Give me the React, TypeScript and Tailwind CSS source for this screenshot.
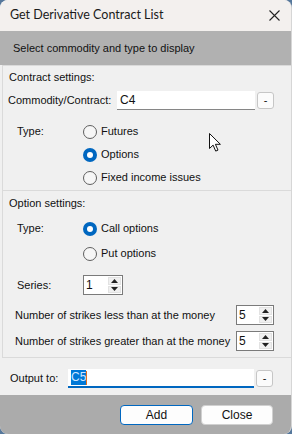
import React from 'react';

const Radio = ({ checked, label }: { checked?: boolean; label: string }) => (
  <div className="flex items-center gap-[4px]">
    {checked ? (
      <div className="w-[14px] h-[14px] rounded-full bg-[#0067c0] flex items-center justify-center">
        <div className="w-[6px] h-[6px] rounded-full bg-white" />
      </div>
    ) : (
      <div className="w-[14px] h-[14px] rounded-full border border-[#5f5f5f] bg-[#f6f6f6]" />
    )}
    <span>{label}</span>
  </div>
);

const Spin = ({ value, width }: { value: string; width: string }) => (
  <div className={`${width} h-[20px] bg-white border border-[#7a7a7a] flex`}>
    <span className="flex-1 pl-[2px] text-[12px] leading-[18px]">{value}</span>
    <div className="w-[14px] flex flex-col gap-[1px] py-[1px] pr-[1px]">
      <div className="flex-1 bg-[#f0f0f0] border border-[#e2e2e2] flex items-center justify-center">
        <svg width="7" height="4" viewBox="0 0 7 4"><path d="M3.5 0L7 4H0z" fill="#222" /></svg>
      </div>
      <div className="flex-1 bg-[#f0f0f0] border border-[#e2e2e2] flex items-center justify-center">
        <svg width="7" height="4" viewBox="0 0 7 4"><path d="M0 0h7L3.5 4z" fill="#222" /></svg>
      </div>
    </div>
  </div>
);

const DashButton = () => (
  <div className="w-[17px] h-[17px] rounded-[3px] border border-[#c6c6c6] bg-[#fbfbfb] flex items-center justify-center text-[11px] leading-none">
    -
  </div>
);

export default function App() {
  return (
    <div className="w-[292px] h-[434px] bg-[#56789c] text-[11px] text-[#111] font-['Liberation_Sans',Arial,sans-serif]">
      <div className="relative h-full rounded-[8px] overflow-hidden flex flex-col bg-[#f0f0f0] border-r border-[#d6d6d6]">
        <div className="h-[31px] shrink-0 bg-[#f3f0ee] flex items-center justify-between pl-[10px] pr-[11px]">
          <span className="text-[12.5px] font-['Lato',sans-serif] text-[#1a1a1a]">Get Derivative Contract List</span>
          <svg width="11" height="11" viewBox="0 0 11 11" stroke="#222" strokeWidth="1.1">
            <path d="M0.5 0.5l10 10M10.5 0.5l-10 10" />
          </svg>
        </div>
        <div className="h-[34px] shrink-0 bg-[#b1b1b1] flex items-center pl-[13px] text-[11px]">
          Select commodity and type to display
        </div>

        <div className="ml-[2px] border-t border-l border-[#dadada] h-[125px] shrink-0 flex flex-col">
          <div className="h-[20px] flex items-center pl-[6px] mt-[1px]">Contract settings:</div>
          <div className="h-[20px] mt-[3px] flex items-center pl-[5px]">
            <span className="w-[109px]">Commodity/Contract:</span>
            <div className="w-[138px] h-[19px] bg-white border-b border-[#868686] flex items-center pl-[3px] text-[12px]">C4</div>
            <div className="ml-[2px]"><DashButton /></div>
          </div>
          <div className="mt-[10px] flex pl-[14px]">
            <div className="w-[66px] h-[23px] flex items-center">Type:</div>
            <div className="flex flex-col">
              <div className="h-[23px] flex items-center"><Radio label="Futures" /></div>
              <div className="h-[23px] flex items-center"><Radio checked label="Options" /></div>
              <div className="h-[23px] flex items-center"><Radio label="Fixed income issues" /></div>
            </div>
          </div>
        </div>

        <div className="ml-[2px] border-t border-l border-[#dadada] h-[167px] shrink-0 flex flex-col">
          <div className="h-[25px] flex items-center pl-[6px]">Option settings:</div>
          <div className="flex pl-[14px]">
            <div className="w-[66px] h-[25px] flex items-center">Type:</div>
            <div className="flex flex-col">
              <div className="h-[25px] flex items-center"><Radio checked label="Call options" /></div>
              <div className="h-[25px] flex items-center"><Radio label="Put options" /></div>
            </div>
          </div>
          <div className="mt-[9px] h-[20px] flex items-center pl-[14px]">
            <span className="w-[66px]">Series:</span>
            <Spin value="1" width="w-[40px]" />
          </div>
          <div className="mt-[10px] h-[20px] flex items-center pl-[12px]">
            <span className="w-[221px]">Number of strikes less than at the money</span>
            <Spin value="5" width="w-[38px]" />
          </div>
          <div className="mt-[6px] h-[20px] flex items-center pl-[12px]">
            <span className="w-[221px]">Number of strikes greater than at the money</span>
            <Spin value="5" width="w-[38px]" />
          </div>
        </div>

        <div className="ml-[2px] border-t border-[#dadada] flex-1 flex items-start pt-[11px] pl-[8px]">
          <div className="h-[19px] flex items-center">
            <span className="w-[58px]">Output to:</span>
            <div className="w-[186px] h-[19px] bg-white border-b-2 border-[#0067c0] flex items-center pl-[3px] text-[12px]">
              <span className="bg-[#0078d7] text-[#cfe6ff] leading-[15px]">C5</span>
              <span className="w-[1px] h-[14px] bg-[#e07020]" />
            </div>
            <div className="ml-[2px]"><DashButton /></div>
          </div>
        </div>

        <div className="h-[39px] shrink-0 bg-[#ababab] flex items-center justify-end gap-[8px] pr-[18px]">
          <div className="w-[73px] h-[20px] rounded-[4px] bg-[#fdfdfd] border border-[#0067c0] flex items-center justify-center text-[12px]">Add</div>
          <div className="w-[72px] h-[20px] rounded-[4px] bg-[#fdfdfd] border border-[#d0d0d0] flex items-center justify-center text-[12px]">Close</div>
        </div>

        <svg className="absolute left-[209px] top-[133px]" width="13" height="19" viewBox="0 0 13 19">
          <path d="M0.5 0.5v15l3.6-3.4 2.6 6 2.3-1-2.6-5.8h5z" fill="#fff" stroke="#111" strokeWidth="1" strokeLinejoin="round" />
        </svg>
      </div>
    </div>
  );
}
